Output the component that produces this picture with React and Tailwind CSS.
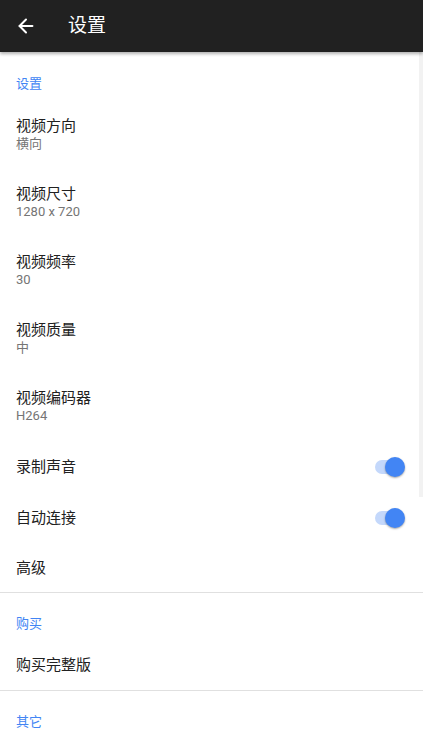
import { ArrowLeft } from 'lucide-react';

const font = { fontFamily: '"Roboto", "Noto Sans CJK SC", sans-serif' };

const Header = ({ label, h = 'h-[47px] pb-[8px]' }) => (
  <div className={`${h} flex items-end pl-4`}>
    <p className="text-[13px] leading-[16px] text-[#4285f4]">{label}</p>
  </div>
);

const Item = ({ title, summary }) => (
  <div className="h-[68px] pt-[16px] pl-4">
    <p className="text-[15px] leading-[18px] text-[#212121]">{title}</p>
    <p className="text-[13px] leading-[18px] text-[#757575]">{summary}</p>
  </div>
);

const Switch = () => (
  <div className="relative w-[34px] h-[20px] flex items-center">
    <div className="absolute left-[4px] right-[4px] h-[14px] rounded-full bg-[#c4d8fb]" />
    <div className="absolute right-0 w-[20px] h-[20px] rounded-full bg-[#4285f4] shadow-[0_1px_2px_rgba(0,0,0,0.35)]" />
  </div>
);

const Row = ({ title, toggle, h = 'h-[51px]' }) => (
  <div className={`${h} flex items-center justify-between pl-4 pr-[18px]`}>
    <p className="text-[15px] leading-[18px] text-[#212121]">{title}</p>
    {toggle && <Switch />}
  </div>
);

const Divider = () => <div className="h-px bg-[#e0e0e0]" />;

export default function App() {
  return (
    <div className="relative h-[752px] w-[423px] overflow-hidden bg-white" style={font}>
      <div className="relative z-10 h-[52px] bg-[#212121] flex items-center shadow-[0_2px_3px_rgba(0,0,0,0.3)]">
        <ArrowLeft size={22} strokeWidth={2.2} className="ml-[15px] text-white" />
        <h1 className="ml-[31px] text-[19px] leading-[24px] text-white">设置</h1>
      </div>

      <Header label="设置" h="h-[49px] pb-[9px]" />
      <Item title="视频方向" summary="横向" />
      <Item title="视频尺寸" summary="1280 x 720" />
      <Item title="视频频率" summary="30" />
      <Item title="视频质量" summary="中" />
      <Item title="视频编码器" summary="H264" />
      <Row title="录制声音" toggle />
      <Row title="自动连接" toggle />
      <Row title="高级" h="h-[49px]" />
      <Divider />
      <Header label="购买" />
      <Row title="购买完整版" h="h-[50px]" />
      <Divider />
      <Header label="其它" />

      <div className="absolute right-0 top-[52px] w-[4px] h-[445px] bg-[#f2f2f2]" />
    </div>
  );
}
